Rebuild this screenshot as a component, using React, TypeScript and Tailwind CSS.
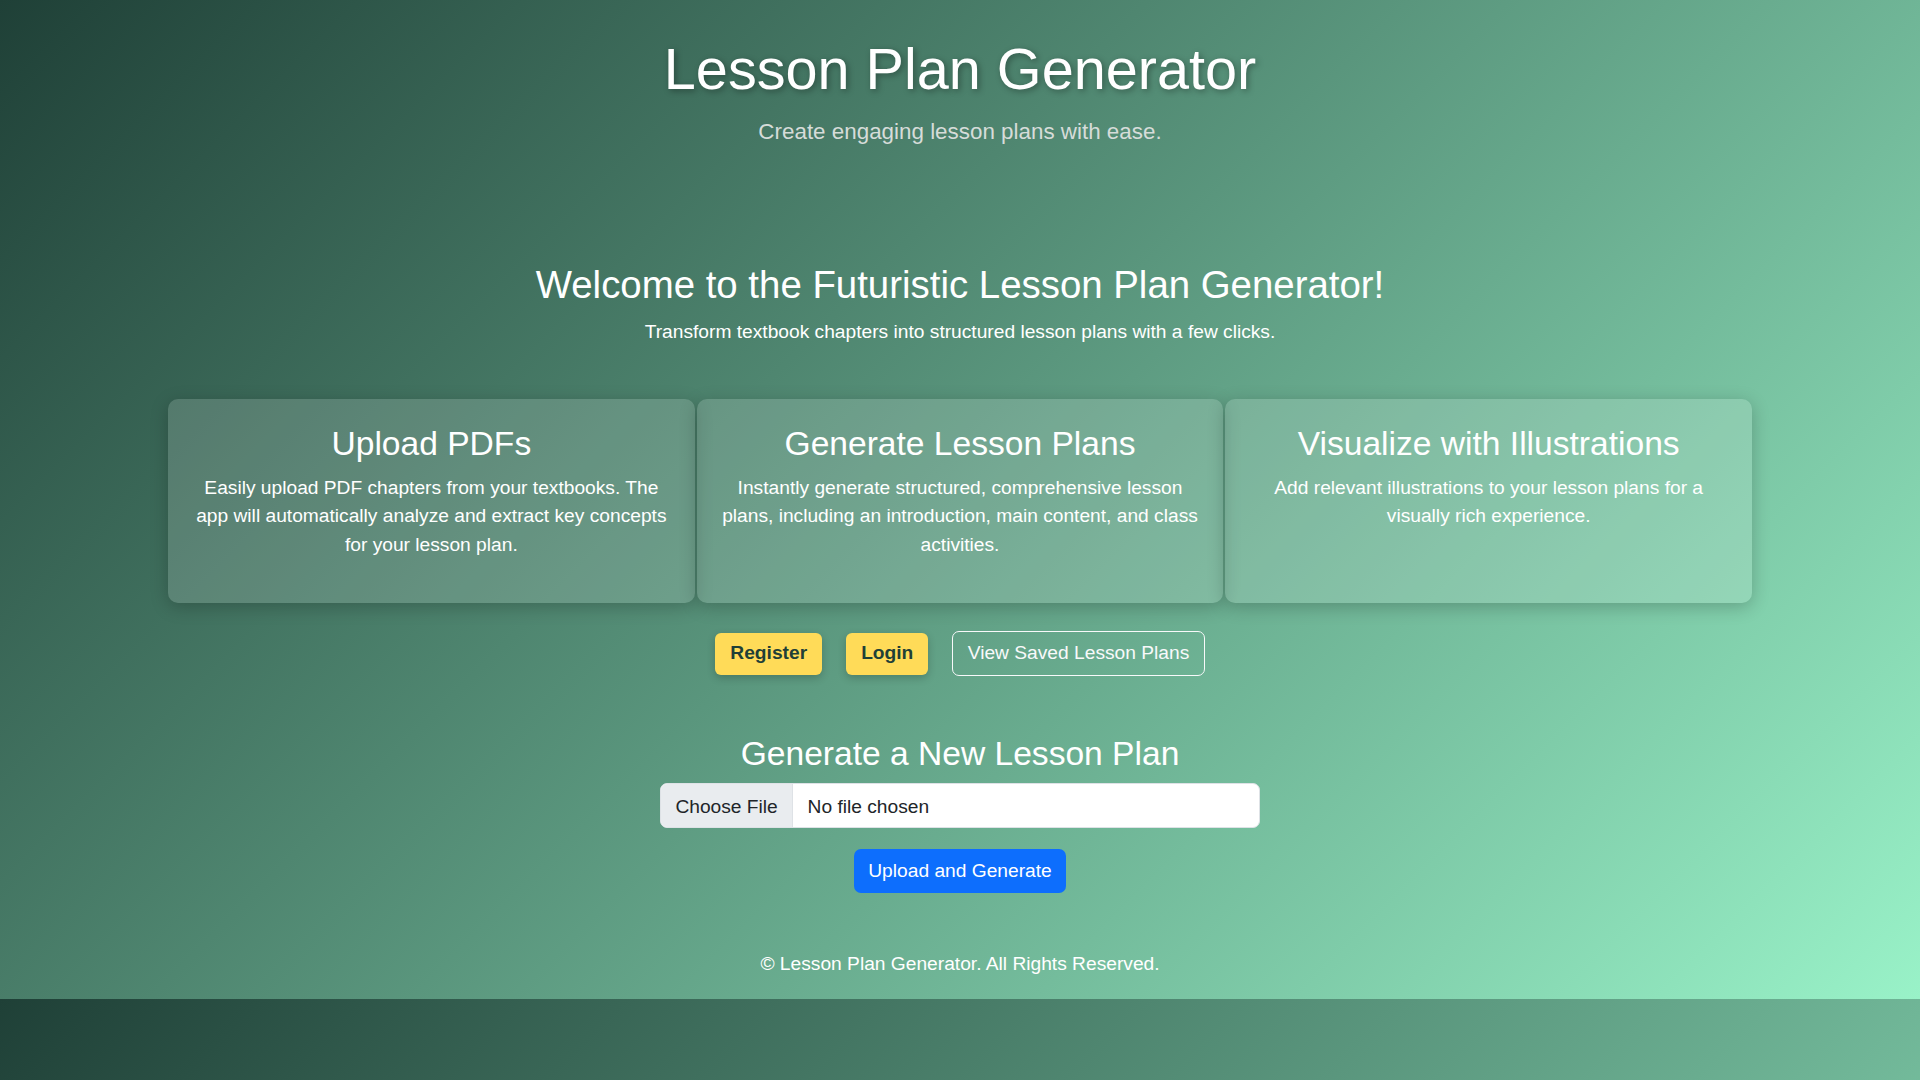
const features = [
  {
    title: "Upload PDFs",
    text: "Easily upload PDF chapters from your textbooks. The app will automatically analyze and extract key concepts for your lesson plan.",
  },
  {
    title: "Generate Lesson Plans",
    text: "Instantly generate structured, comprehensive lesson plans, including an introduction, main content, and class activities.",
  },
  {
    title: "Visualize with Illustrations",
    text: "Add relevant illustrations to your lesson plans for a visually rich experience.",
  },
];

const App = () => {
  return (
    <div className="min-h-screen bg-[linear-gradient(135deg,#1f4037,#99f2c8)] bg-[length:100%_999px] bg-repeat text-white font-['Liberation_Sans',Arial,sans-serif]">
      <div className="flex flex-col items-center h-[999px]">
        {/* Header */}
        <header className="pt-[35px] text-center">
          <h1 className="text-[57.6px] leading-[1.2] mb-[11px] [text-shadow:2px_2px_6px_rgba(0,0,0,0.35)]">
            Lesson Plan Generator
          </h1>
          <p className="text-[22.4px] leading-[1.5] text-[#d6dcd9]">
            Create engaging lesson plans with ease.
          </p>
        </header>

        {/* Welcome */}
        <section className="mt-[113px] text-center">
          <h2 className="text-[38.4px] leading-[1.2] mb-[10.5px]">
            Welcome to the Futuristic Lesson Plan Generator!
          </h2>
          <p className="text-[19.2px] leading-[1.5]">
            Transform textbook chapters into structured lesson plans with a few clicks.
          </p>
        </section>

        {/* Feature cards */}
        <div className="mt-[52px] grid grid-cols-3 gap-[2px] w-[1584px]">
          {features.map((f) => (
            <div
              key={f.title}
              className="h-[204px] rounded-[10px] bg-white/15 shadow-[0_4px_18px_rgba(0,0,0,0.22)] px-[19.2px] pt-[24.5px] text-center"
            >
              <h3 className="text-[33.6px] leading-[1.2] mb-[9.6px]">{f.title}</h3>
              <p className="text-[19.2px] leading-[1.5]">{f.text}</p>
            </div>
          ))}
        </div>

        {/* Actions */}
        <div className="mt-[28px] flex items-center gap-[24px] h-[45px]">
          <button className="h-[42px] px-[15px] rounded-[6px] bg-[#ffdb58] text-[#1f4037] font-bold text-[19.2px] shadow-[0_3px_8px_rgba(0,0,0,0.2)]">
            Register
          </button>
          <button className="h-[42px] px-[15px] rounded-[6px] bg-[#ffdb58] text-[#1f4037] font-bold text-[19.2px] shadow-[0_3px_8px_rgba(0,0,0,0.2)]">
            Login
          </button>
          <button className="h-[45px] px-[14.4px] rounded-[7px] border border-[#f8f9fa] text-[#f8f9fa] text-[19.2px]">
            View Saved Lesson Plans
          </button>
        </div>

        {/* Upload form */}
        <section className="mt-[58px] flex flex-col items-center">
          <h3 className="text-[33.6px] leading-[1.2] mb-[9px]">Generate a New Lesson Plan</h3>
          <input
            type="file"
            className="w-[600px] h-[45px] rounded-[7px] border border-[#dee2e6] bg-white text-[#212529] text-[19.2px] leading-[1.5] px-[14.4px] py-[7.2px] overflow-hidden font-['Liberation_Sans',Arial,sans-serif] file:font-['Liberation_Sans',Arial,sans-serif] file:text-[19.2px] file:text-[#212529] file:bg-[#e9ecef] file:border-0 file:border-r file:border-solid file:border-[#dee2e6] file:rounded-none file:px-[14.4px] file:py-[7.2px] file:-my-[7.2px] file:-ml-[14.4px] file:mr-[14.4px] file:h-[45px]"
          />
          <button className="mt-[21px] h-[44px] px-[14.4px] rounded-[7px] bg-[#0d6efd] text-white text-[19.2px]">
            Upload and Generate
          </button>
        </section>

        {/* Footer */}
        <footer className="mt-[57px] text-[19.2px] leading-[1.5]">
          © Lesson Plan Generator. All Rights Reserved.
        </footer>
      </div>
    </div>
  );
};

export default App;
